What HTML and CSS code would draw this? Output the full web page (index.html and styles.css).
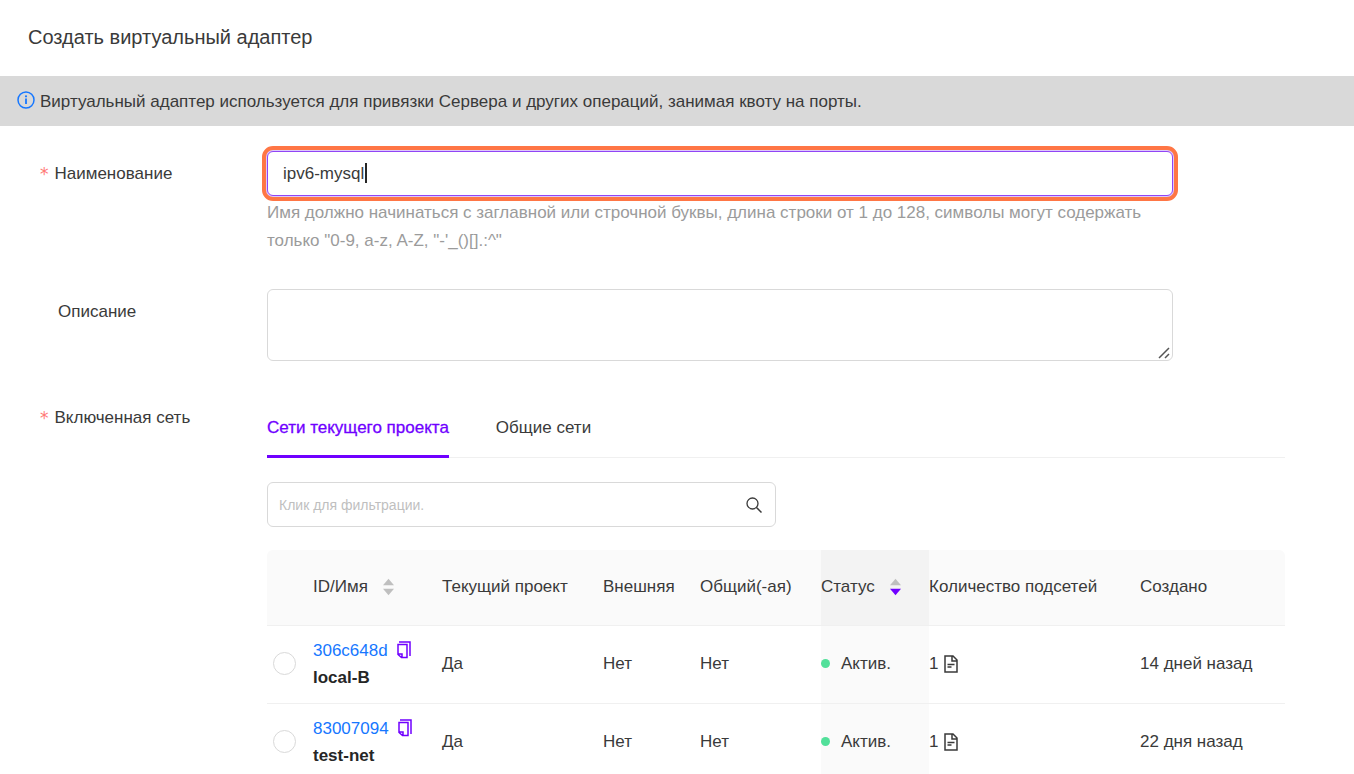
FILE: index.html
```html
<!DOCTYPE html>
<html lang="ru">
<head>
<meta charset="utf-8">
<title>Создать виртуальный адаптер</title>
<link rel="stylesheet" href="styles.css">
</head>
<body>
<svg class="sprite" aria-hidden="true">
  <symbol id="i-copy" viewBox="0 0 14 18"><path d="M2 1h11v14M1 3.500h9v13H4.500L1 13.500zM1 13h4v3.500" fill="none" stroke="currentColor" stroke-width="1.500"/></symbol>
  <symbol id="i-file" viewBox="0 0 14 18"><path d="M1 1h8l4 4v12H1zM8 1v5h5M3.500 9.500h7M3.500 12h4" fill="none" stroke="currentColor" stroke-width="1.500"/></symbol>
</svg>
<header class="title-bar"><h1 class="title">Создать виртуальный адаптер</h1></header>
<div class="notice">
  <svg class="notice-icon" viewBox="0 0 18 18" aria-hidden="true"><circle cx="9" cy="9" r="8" fill="none" stroke="currentColor" stroke-width="1.500"/><path d="M9 7.500v5.500" stroke="currentColor" stroke-width="1.800"/><circle cx="9" cy="5.300" r="1.100" fill="currentColor"/></svg>
  <span>Виртуальный адаптер используется для привязки Сервера и других операций, занимая квоту на порты.</span>
</div>
<form class="form">
  <div class="field">
    <label class="label required" for="name">Наименование</label>
    <div class="control">
      <div class="name-box">
        <input class="input input-name" id="name" type="text" value="ipv6-mysql" aria-describedby="name-help">
        <span class="caret" aria-hidden="true"></span>
      </div>
      <p class="help" id="name-help">Имя должно начинаться с заглавной или строчной буквы, длина строки от 1 до 128, символы могут содержать только "0-9, a-z, A-Z, "-'_()[].:^"</p>
    </div>
  </div>
  <div class="field">
    <label class="label optional" for="description">Описание</label>
    <div class="control description">
      <textarea class="input textarea" id="description"></textarea>
      <svg class="grip" viewBox="0 0 12 12" aria-hidden="true"><path d="M1 11L11 1M7 11l4-4" stroke="currentColor" stroke-width="1.500"/></svg>
    </div>
  </div>
  <div class="field">
    <span class="label required" id="net-label">Включенная сеть</span>
    <div class="networks">
      <div class="tabs" role="tablist" aria-labelledby="net-label">
        <button class="tab active" type="button" role="tab" aria-selected="true">Сети текущего проекта</button>
        <button class="tab" type="button" role="tab" aria-selected="false">Общие сети</button>
      </div>
      <div class="search">
        <input class="search-input" type="text" placeholder="Клик для фильтрации." aria-label="Клик для фильтрации.">
        <button class="search-button" type="button" aria-label="Поиск"><svg viewBox="0 0 16 16"><circle cx="6.500" cy="6.500" r="5.500" fill="none" stroke="currentColor" stroke-width="1.300"/><path d="M10.500 10.500L15.500 15.500" stroke="currentColor" stroke-width="1.500"/></svg></button>
      </div>
      <table class="table">
        <colgroup><col class="c-radio"><col class="c-id"><col class="c-project"><col class="c-external"><col class="c-shared"><col class="c-status"><col class="c-subnets"><col></colgroup>
        <thead><tr>
          <th></th>
          <th><span class="head">ID/Имя <button class="sort" type="button" aria-label="Сортировать по ID/Имя"><svg viewBox="0 0 12 18"><path d="M6 0l6 7H0z"/><path d="M6 18l6-7H0z"/></svg></button></span></th>
          <th>Текущий проект</th><th>Внешняя</th><th>Общий(-ая)</th>
          <th class="sorted"><span class="head">Статус <button class="sort" type="button" aria-label="Сортировать по статусу"><svg viewBox="0 0 12 18"><path d="M6 0l6 7H0z"/><path class="down" d="M6 18l6-7H0z"/></svg></button></span></th>
          <th>Количество подсетей</th><th>Создано</th>
        </tr></thead>
        <tbody>
          <tr>
            <td><input class="radio" type="radio" name="network" aria-label="local-B"></td>
            <td><div class="id"><a href="#">306c648d</a><button class="copy" type="button" aria-label="Копировать"><svg><use href="#i-copy"/></svg></button></div><strong class="name">local-B</strong></td>
            <td>Да</td><td>Нет</td><td>Нет</td>
            <td class="sorted"><span class="status">Актив.</span></td>
            <td><span class="count">1<svg><use href="#i-file"/></svg></span></td><td>14 дней назад</td>
          </tr>
          <tr>
            <td><input class="radio" type="radio" name="network" aria-label="test-net"></td>
            <td><div class="id"><a href="#">83007094</a><button class="copy" type="button" aria-label="Копировать"><svg><use href="#i-copy"/></svg></button></div><strong class="name">test-net</strong></td>
            <td>Да</td><td>Нет</td><td>Нет</td>
            <td class="sorted"><span class="status">Актив.</span></td>
            <td><span class="count">1<svg><use href="#i-file"/></svg></span></td><td>22 дня назад</td>
          </tr>
        </tbody>
      </table>
    </div>
  </div>
</form>
</body>
</html>
```
FILE: styles.css
```css
* { box-sizing: border-box; }
body {
  margin: 0;
  height: 100vh;
  overflow: hidden;
  background: #fff;
  color: #3a3a3a;
  font: 17px/28px "Liberation Sans", Arial, sans-serif;
}
button, input, textarea { font: inherit; color: inherit; }
button { padding: 0; border: 0; background: none; cursor: pointer; }
svg { display: block; }
.sprite { display: none; }
.title-bar { padding: 23px 28px 25px; }
.title { margin: 0; font-size: 20px; font-weight: 400; line-height: 28px; }
.notice { display: flex; gap: 5px; padding: 12px 17px 10px; background: #d9d9d9; }
.notice-icon { width: 18px; height: 18px; margin-top: 3px; color: #1677ff; }
.form { display: grid; gap: 34px; padding: 25px 69px 0 0; }
.field { display: grid; grid-template-columns: 267px minmax(0, 1fr); align-items: start; }
.label { padding: 9px 0 0 40px; }
.label.required { display: flex; gap: 6px; }
.label.required::before { content: "*"; color: #ff7875; font-family: "DejaVu Sans", sans-serif; }
.label.optional { padding-left: 58px; }
.control { width: 89%; }
.input { display: block; width: 100%; border: 1px solid #d9d9d9; border-radius: 6px; background: #fff; }
.name-box { position: relative; }
.input-name {
  height: 45px;
  padding: 0 15px;
  border-color: #9145f5;
  box-shadow: 0 0 0 2px #dcc8fc;
  outline: 4px solid #ff7645;
  outline-offset: 1px;
}
.caret { position: absolute; left: 98px; top: 12px; width: 2px; height: 20px; background: #262626; }
.help { margin: 3px 0 0; color: #9b9b9b; }
.description { position: relative; }
.textarea { height: 72px; padding: 8px 15px; resize: none; }
.grip { position: absolute; right: 3px; bottom: 2px; width: 12px; height: 12px; color: #555; }
.networks { padding-top: 18px; }
.tabs { display: flex; gap: 47px; border-bottom: 1px solid #f0f0f0; }
.tab { padding: 1px 0 13px; margin-bottom: -1px; border-bottom: 3px solid transparent; line-height: 28px; }
.tab.active { border-color: #7000ff; color: #7000ff; -webkit-text-stroke: 0.3px currentColor; }
.search { display: flex; width: 50%; height: 45px; margin: 24px 0 23px; border: 1px solid #d9d9d9; border-radius: 6px; }
.search-input { flex: 1; min-width: 0; padding: 0 11px; border: 0; background: none; outline: 0; font-size: 14px; }
.search-input::placeholder { color: #bfbfbf; }
.search-button { width: 42px; padding: 0 13px; }
.search-button svg { width: 16px; height: 16px; }
.table { width: 100%; table-layout: fixed; border-spacing: 0; }
.c-radio { width: 46px; }
.c-id { width: 129px; }
.c-project { width: 161px; }
.c-external { width: 97px; }
.c-shared { width: 121px; }
.c-status { width: 108px; }
.c-subnets { width: 211px; }
.table th, .table td { padding: 0 0 2px; border-bottom: 1px solid #f0f0f0; text-align: left; font-weight: 400; white-space: nowrap; }
.table th { height: 76px; background: #fafafa; }
.table th:first-child { border-top-left-radius: 6px; }
.table th:last-child { border-top-right-radius: 6px; }
.table td { height: 78px; line-height: 27px; }
.table th.sorted { background: #f3f3f3; }
.table td.sorted { background: #fafafa; }
.head { display: flex; align-items: center; gap: 15px; }
.sort svg { width: 11px; height: 18px; fill: #bfbfbf; }
.sort .down { fill: #7000ff; }
.radio { display: block; appearance: none; width: 23px; height: 23px; margin: 0 0 0 6px; border: 1px solid #d9d9d9; border-radius: 50%; background: #fff; }
.id { display: flex; align-items: center; gap: 9px; }
.id a { color: #1677ff; text-decoration: none; }
.copy { color: #7000ff; }
.copy svg, .count svg { width: 14px; height: 18px; }
.name { color: #262626; }
.status { display: flex; align-items: center; gap: 11px; }
.status::before { content: ""; width: 9px; height: 9px; border-radius: 50%; background: #52e09a; }
.count { display: flex; align-items: center; gap: 6px; }
```
